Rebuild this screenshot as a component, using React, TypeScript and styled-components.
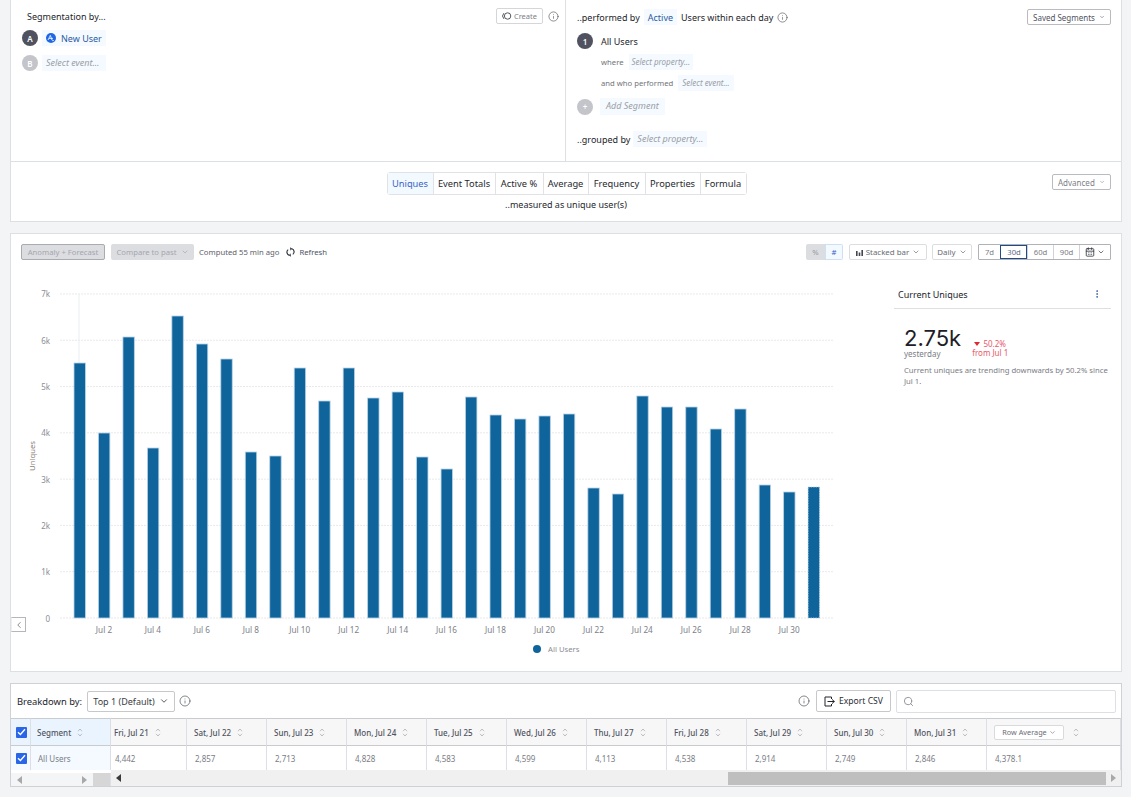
import React from "react";
import styled, { createGlobalStyle } from "styled-components";
import { ChevronDown, ChevronLeft, Info, Search, MoreVertical, CalendarDays } from "lucide-react";

const Global = createGlobalStyle`
  html, body { margin: 0; padding: 0; background: #f3f4f6; }
  body { font-family: "Noto Sans", "Open Sans", Arial, sans-serif; color: #21242b; overflow: hidden; }
  * { box-sizing: border-box; }
`;

const Page = styled.div`
  width: 1131px; height: 797px; padding: 0 9px 0 10px; display: flex; flex-direction: column;
`;
const Panel = styled.section`
  background: #fff; border: 1px solid #dcdfe3; border-top-width: ${p => (p.$flush ? 0 : 1)}px;
`;
const QueryPanel = styled(Panel)`
  height: 162px; display: grid; grid-template-columns: 555px 1fr;
`;
const QueryLeft = styled.div`
  border-right: 1px solid #dcdfe3; padding: 8px 6px 0 11px;
`;
const QueryRight = styled.div`
  padding: 9px 10px 0 11px; display: flex; flex-direction: column;
`;
const TitleRow = styled.div`
  display: flex; align-items: center; justify-content: space-between; height: 16px; padding-left: 5px;
`;
const Title = styled.span`
  font-size: 9px; color: #22252b; white-space: nowrap;
`;
const Row = styled.div`
  display: flex; align-items: center; gap: ${p => p.$gap ?? 4}px; margin-top: ${p => p.$mt ?? 0}px; padding-left: ${p => p.$pl ?? 0}px;
`;
const Spread = styled(Row)`
  justify-content: space-between;
`;
const Badge = styled.span`
  width: 16px; height: 16px; border-radius: 50%; background: ${p => (p.$off ? "#c3c5ca" : "#50535f")}; color: #fff;
  font-size: 8px; font-weight: 600; display: flex; align-items: center; justify-content: center; flex: none;
`;
const Chip = styled.span`
  background: #f4faff; height: ${p => p.$h ?? 16}px; width: ${p => (p.$w ? p.$w + "px" : "auto")}; padding: 0 ${p => p.$px ?? 4}px ${p => (p.$blue ? 0 : 2)}px; display: inline-flex; align-items: center; gap: 5px;
  font-size: ${p => p.$fs ?? 9}px; color: ${p => (p.$blue ? "#2c5aa0" : "#9b9ea6")}; font-style: ${p => (p.$blue ? "normal" : "italic")};
  white-space: nowrap;
`;
const TinyBtn = styled.span`
  border: 1px solid #d4d6da; border-radius: 2px; height: 16px; padding: 0 5px; background: #fff; display: inline-flex; align-items: center; gap: 2px;
  font-size: 7.5px; color: #7c7f87; white-space: nowrap;
`;
const CreateGroup = styled.div`
  display: flex; align-items: center; gap: 5px;
`;
const SavedBtn = styled(TinyBtn)`
  height: 16px; width: ${p => p.$w}px; justify-content: center; color: ${p => p.$c ?? "#50535f"}; border-color: #b9bbc0; gap: 4px; font-size: 8px;
`;
const Muted = styled.span`
  font-size: 7.7px; color: #70737b; white-space: nowrap;
`;
const MetricPanel = styled(Panel)`
  height: 60px; padding-top: 10px; position: relative; display: flex; flex-direction: column; align-items: center; border-top: 0;
`;
const Tabs = styled.div`
  display: flex; height: 23px; border: 1px solid #e0e2e6; border-radius: 3px; margin-left: 1px; flex: none;
`;
const Tab = styled.span`
  font-size: 9.3px; display: flex; align-items: center; white-space: nowrap;
  color: ${p => (p.$on ? "#3b63c9" : "#25282e")}; background: ${p => (p.$on ? "#f2f9ff" : "#fff")};
  width: ${p => p.$w}px; justify-content: center;
  & + & { border-left: 1px solid #e0e2e6; }
`;
const Measured = styled.div`
  font-size: 9px; color: #25282e; margin-top: 3px;
`;
const AdvancedSlot = styled.div`
  position: absolute; right: 10px; top: 12px; display: flex;
`;
const ChartPanel = styled(Panel)`
  height: 439px; margin-top: 11px; padding: 10px 10px 0 10px; position: relative;
`;
const Toolbar = styled.div`
  display: flex; align-items: center; justify-content: space-between; height: 16px;
`;
const ToolGroup = styled.div`
  display: flex; align-items: center;
`;
const GhostBtn = styled.span`
  height: 16px; width: ${p => p.$w}px; border-radius: 2px; background: #dcdde1; color: #a4a6ad; font-size: 7.7px; display: inline-flex; align-items: center; justify-content: center; gap: 4px;
  white-space: nowrap; border: ${p => (p.$outline ? "1px solid #a9abb1" : "0")}; margin-right: ${p => p.$mr ?? 6}px;
`;
const Computed = styled.span`
  font-size: 7.7px; color: #5d606a; white-space: nowrap;
`;
const Refresh = styled.span`
  display: inline-flex; align-items: center; gap: 4px; font-size: 7.7px; color: #4a5568; margin-left: 7px; white-space: nowrap;
`;
const Toggle = styled.div`
  display: flex; height: 16px; border-radius: 2px; overflow: hidden; margin-right: 6px;
`;
const ToggleCell = styled.span`
  width: ${p => (p.$on ? 18 : 19)}px; height: 16px; font-size: 7.7px; display: flex; align-items: center; justify-content: center;
  background: ${p => (p.$on ? "#f2f9ff" : "#dcdde1")}; color: ${p => (p.$on ? "#3b63c9" : "#9a9ca3")};
  border: ${p => (p.$on ? "1px solid #cfe0f5" : "0")};
`;
const SelectBtn = styled.span`
  height: 16px; width: ${p => p.$w}px; border: 1px solid #dcdde1; border-radius: 2px; display: inline-flex; align-items: center; justify-content: center; gap: 3px;
  font-size: 7.9px; color: #6a6d75; margin-right: ${p => p.$mr ?? 5}px; white-space: nowrap;
`;
const RangeGroup = styled.div`
  display: flex; height: 16px; border: 1px solid #b0b2b7; border-radius: 1px;
`;
const RangeCell = styled.span`
  width: ${p => p.$w ?? 26}px; font-size: 7.7px; color: #7a7d85; display: flex; align-items: center; justify-content: center; gap: 2px;
  border-left: 1px solid #d0d2d6;
  &:first-child { border-left: 0; }
  ${p => p.$on && "outline: 1px solid #1f4a8c; outline-offset: -1px; color: #5a6a85;"}
`;
const ChartBody = styled.div`
  display: flex; margin: 20px 0 0 -10px;
`;
const Side = styled.aside`
  width: 217px; margin-left: 25px; flex: none;
`;
const SideHead = styled.div`
  height: 29px; display: flex; align-items: center; justify-content: space-between; border-bottom: 1px solid #dcdfe3; padding: 0 9px 0 4px;
  font-size: 9px; color: #22252b;
`;
const KpiRow = styled.div`
  display: flex; margin: 18px 0 0 10px; gap: 11px;
`;
const KpiNum = styled.div`
  font-family: "Inter", "Noto Sans", sans-serif; font-size: 22px; line-height: 23px; color: #1d2026;
`;
const KpiSub = styled.div`
  font-size: 8px; line-height: 8px; color: #7a7d85;
`;
const Delta = styled.div`
  font-size: 8px; line-height: 9px; color: #e8596a; margin-top: 12px; text-align: center;
`;
const Caret = styled.span`
  display: inline-block; width: 0; height: 0; border: 3.5px solid transparent; border-top: 4px solid #e5252f; border-bottom: 0; margin-right: 3px; vertical-align: 1px;
`;
const KpiText = styled.p`
  margin: 7px 0 0 10px; font-size: 7.7px; line-height: 10.5px; color: #7a7d85; width: 207px;
`;
const Collapse = styled.span`
  position: absolute; left: 0; top: 383px; width: 15px; height: 15px; background: #fff; border: 1px solid #b4b6bb; border-left-color: #eee;
  display: flex; align-items: center; justify-content: center; color: #777;
`;
const Legend = styled.div`
  position: absolute; left: 522px; top: 410px; display: flex; align-items: center; gap: 7px; font-size: 7.7px; color: #8a8d95;
`;
const Dot = styled.span`
  width: 8px; height: 8px; border-radius: 50%; background: #0f659b;
`;
const BreakPanel = styled(Panel)`
  height: 104px; margin-top: 11px; display: flex; flex-direction: column; border-color: #cfd1d5;
`;
const BreakBar = styled.div`
  height: 34px; display: flex; align-items: center; justify-content: space-between; padding: 0 5px 0 6px; flex: none;
`;
const BreakLabel = styled.span`
  font-size: 9.4px; color: #22252b; margin-right: 5px;
`;
const BreakSelect = styled.span`
  height: 21px; width: 88px; border: 1px solid #c6c8cc; border-radius: 2px; display: inline-flex; align-items: center; justify-content: center; gap: 4px; font-size: 9px; color: #3a3d45; white-space: nowrap;
`;
const Export = styled.span`
  height: 22px; width: 75px; border: 1px solid #c6c8cc; border-radius: 2px; display: inline-flex; align-items: center; justify-content: center; gap: 4px; font-size: 8.6px; color: #2b2e36; margin: 0 5px 0 6px; white-space: nowrap;
`;
const SearchBox = styled.span`
  width: 220px; height: 23px; border: 1px solid #dcdfe3; border-radius: 2px; display: inline-flex; align-items: center; padding-left: 6px; color: #8c8f96;
`;
const Table = styled.div`
  display: grid; grid-template-columns: 20px 80px 76px repeat(10, 80px) 1fr; grid-template-rows: 28px 24px; flex: none;
`;
const HeadCell = styled.div`
  background: ${p => (p.$seg ? "#e9f4fe" : "#f7f7f7")}; border-top: 1px solid #c9cbcf; border-bottom: 1px solid #c9cbcf; border-right: 1px solid #dcdfe3;
  font-size: 8px; font-weight: 500; color: #50535f; display: flex; align-items: center; gap: 6px; padding-left: ${p => p.$pl ?? 7}px; white-space: nowrap;
`;
const BodyCell = styled.div`
  background: ${p => (p.$seg ? "#f4faff" : "#fff")}; border-right: 1px solid #dcdfe3; font-size: 8px; color: #7a7d85; display: flex; align-items: center;
  padding-left: ${p => p.$pl ?? 8}px; white-space: nowrap;
`;
const Check = styled.span`
  width: 11px; height: 11px; background: #2a66e8; border-radius: 1px; display: flex; align-items: center; justify-content: center;
`;
const CheckHead = styled(HeadCell)`
  background: #e9f4fe; padding-left: 5px;
`;
const CheckBody = styled(BodyCell)`
  background: #f4faff; padding-left: 5px;
`;
const RowAvg = styled.span`
  height: 15px; width: 70px; border: 1px solid #d8dade; border-radius: 2px; background: #fff; font-size: 7.3px; font-weight: 400; color: #6a6d75; display: inline-flex; align-items: center; justify-content: center; gap: 2px;
`;
const AvgHead = styled(HeadCell)`
  gap: 9px;
`;
const Scrolls = styled.div`
  display: grid; grid-template-columns: 100px 1fr; height: 16px; flex: none;
`;
const LeftScroll = styled.div`
  background: #f4f5f6; display: flex; align-items: center; justify-content: space-between; padding-left: 6px; margin-top: 3px; height: 13px; border-right: 1px solid #dcdfe3;
`;
const LeftThumb = styled.span`
  width: 17px; height: 13px; background: #d6d6d6;
`;
const Arrow = styled.span`
  width: 0; height: 0; border: 4px solid transparent; ${p => (p.$dir === "left" ? "border-right: 5px solid " + p.$c + "; border-left: 0;" : "border-left: 5px solid " + p.$c + "; border-right: 0;")}
`;
const LeftArrows = styled.div`
  flex: 1; display: flex; justify-content: space-between; padding-right: 6px;
`;
const RightScroll = styled.div`
  background: #f0f0f0; display: flex; align-items: center; padding: 0 5px 0 5px;
`;
const Thumb = styled.span`
  height: 13px; width: 378px; background: #bfbfbf; margin-left: auto; margin-right: 5px;
`;
const InfoGap = styled.span`
  display: inline-flex; margin-left: ${p => p.$ml ?? 0}px;
`;

const Sort = () => (
  <svg width="6" height="9" viewBox="0 0 6 9" fill="none" stroke="#b5b7bc" strokeWidth="0.9">
    <path d="M1 3.2 3 1l2 2.2M1 5.8 3 8l2-2.2" />
  </svg>
);
const Tick = () => (
  <svg width="9" height="8" viewBox="0 0 9 8" fill="none" stroke="#fff" strokeWidth="1.4">
    <path d="M1 4.2 3.4 6.5 8 1.2" />
  </svg>
);
const Logo = () => (
  <svg width="10" height="10" viewBox="0 0 10 10">
    <circle cx="5" cy="5" r="5" fill="#1f66e5" />
    <path d="M2 7 4.3 2.4 6 7c.4.8 1 .9 2 .3M3 5.4h4" fill="none" stroke="#fff" strokeWidth=".8" />
  </svg>
);
const CreateIcon = () => (
  <svg width="10" height="10" viewBox="0 0 10 10" fill="none" stroke="#55585f" strokeWidth="1">
    <circle cx="5.6" cy="5" r="3.2" />
    <path d="M1.8 2.2A4.2 4.2 0 0 0 1.8 7.8" />
  </svg>
);
const RefreshIcon = () => (
  <svg width="9" height="10" viewBox="0 0 9 10" fill="none" stroke="#22252b" strokeWidth="1.1">
    <path d="M2.2 2.6A3.2 3.2 0 0 0 3 8.2M6.8 7.4A3.2 3.2 0 0 0 6 1.8" />
    <path d="M4.2.6 6 1.8 4.4 3.2M4.8 9.4 3 8.2 4.6 6.8" fill="#22252b" strokeWidth=".4" />
  </svg>
);
const BarsIcon = () => (
  <svg width="7" height="7" viewBox="0 0 7 7" fill="#44474f">
    <rect x="0" y="2" width="1.6" height="5" /><rect x="2.7" y="3.5" width="1.6" height="3.5" /><rect x="5.4" y="1" width="1.6" height="6" />
  </svg>
);
const ExportIcon = () => (
  <svg width="11" height="11" viewBox="0 0 11 11" fill="none" stroke="#22252b" strokeWidth="1">
    <path d="M7.5 3V1H1v9h6.5V8" />
    <path d="M3.5 5.5h7M8 3.4l2.3 2.1L8 7.6" />
  </svg>
);

const values = [363, 433, 337, 448, 316, 344, 359, 452, 456, 368, 401, 368, 398, 392, 457, 469, 397, 415, 419, 416, 414, 488, 494, 396, 407, 407, 429, 409, 485, 492, 487];
const CHART_TOP = 280;
const BaseY = 618 - CHART_TOP;
const barX = (i: number) => 79.5 - 11 + i * 24.47;

const Chart = () => (
  <svg width="858" height="360" viewBox="0 0 858 360" style={{ display: "block", flex: "none" }}>
    {[0, 1, 2, 3, 4, 5, 6, 7].map(k => {
      const y = BaseY - k * 46.29;
      return (
        <g key={k}>
          <line x1={49} x2={822} y1={y} y2={y} stroke="#e8e9eb" strokeWidth="1" strokeDasharray="2 1" />
          <text x={39} y={y + 3.5} textAnchor="end" fontSize="8" fill="#8a8d95" fontFamily="Noto Sans">{k === 0 ? "0" : `${k}k`}</text>
        </g>
      );
    })}
    <line x1={68} x2={68} y1={14} y2={BaseY} stroke="#e6efef" />
    {values.map((v, i) => (
      <rect key={i} x={barX(i) - 5.5} y={v - CHART_TOP} width={11.4} height={618 - v} fill="#0f659b" stroke="#b8d2e6" strokeWidth="0.8"
        strokeDasharray={i === 30 ? "1.5 1" : undefined} />
    ))}
    {Array.from({ length: 15 }, (_, n) => (
      <text key={n} x={barX(1 + n * 2)} y={BaseY + 14.5} textAnchor="middle" fontSize="8.2" fill="#7d8088" fontFamily="Noto Sans">{`Jul ${2 + n * 2}`}</text>
    ))}
    <text transform={`translate(24 ${BaseY - 162}) rotate(-90)`} textAnchor="middle" fontSize="7.7" fill="#8a7d75" fontFamily="Noto Sans">Uniques</text>
  </svg>
);

const dates = [
  ["Fri, Jul 21", "4,442"], ["Sat, Jul 22", "2,857"], ["Sun, Jul 23", "2,713"], ["Mon, Jul 24", "4,828"], ["Tue, Jul 25", "4,583"], ["Wed, Jul 26", "4,599"],
  ["Thu, Jul 27", "4,113"], ["Fri, Jul 28", "4,538"], ["Sat, Jul 29", "2,914"], ["Sun, Jul 30", "2,749"], ["Mon, Jul 31", "2,846"],
];

export default function App() {
  return (
    <Page>
      <Global />
      <QueryPanel $flush>
        <QueryLeft>
          <TitleRow>
            <Title>Segmentation by...</Title>
            <CreateGroup>
              <TinyBtn><CreateIcon />Create</TinyBtn>
              <Info size={11} color="#44474f" strokeWidth={1.3} />
            </CreateGroup>
          </TitleRow>
          <Row $mt={6}>
            <Badge>A</Badge>
            <Chip $blue $w={64}><Logo />New User</Chip>
          </Row>
          <Row $mt={9}>
            <Badge $off>B</Badge>
            <Chip $w={64}>Select event...</Chip>
          </Row>
        </QueryLeft>
        <QueryRight>
          <Spread>
            <Row $gap={4}>
              <Title>..performed by</Title>
              <Chip $blue>Active</Chip>
              <Title>Users within each day</Title>
              <Info size={11} color="#44474f" strokeWidth={1.3} />
            </Row>
            <SavedBtn $w={84}>Saved Segments <ChevronDown size={8} /></SavedBtn>
          </Spread>
          <Row $mt={8} $gap={8}>
            <Badge>1</Badge>
            <Title>All Users</Title>
          </Row>
          <Row $mt={5} $pl={24} $gap={5}>
            <Muted>where</Muted>
            <Chip $fs={8} $px={3}>Select property...</Chip>
          </Row>
          <Row $mt={5} $pl={24} $gap={5}>
            <Muted>and who performed</Muted>
            <Chip $fs={8}>Select event...</Chip>
          </Row>
          <Row $mt={7} $gap={7}>
            <Badge $off>+</Badge>
            <Chip $h={17} $px={6}>Add Segment</Chip>
          </Row>
          <Row $mt={16} $gap={3}>
            <Title>..grouped by</Title>
            <Chip>Select property...</Chip>
          </Row>
        </QueryRight>
      </QueryPanel>
      <MetricPanel>
        <Tabs>
          <Tab $on $w={45}>Uniques</Tab>
          <Tab $w={62}>Event Totals</Tab>
          <Tab $w={48}>Active %</Tab>
          <Tab $w={45}>Average</Tab>
          <Tab $w={57}>Frequency</Tab>
          <Tab $w={55}>Properties</Tab>
          <Tab $w={46}>Formula</Tab>
        </Tabs>
        <Measured>..measured as unique user(s)</Measured>
        <AdvancedSlot><SavedBtn $w={59} $c="#7c7f87">Advanced <ChevronDown size={8} /></SavedBtn></AdvancedSlot>
      </MetricPanel>
      <ChartPanel>
        <Toolbar>
          <ToolGroup>
            <GhostBtn $outline $w={84}>Anomaly + Forecast</GhostBtn>
            <GhostBtn $w={83} $mr={5}>Compare to past <ChevronDown size={8} /></GhostBtn>
            <Computed>Computed 55 min ago</Computed>
            <Refresh><RefreshIcon />Refresh</Refresh>
          </ToolGroup>
          <ToolGroup>
            <Toggle><ToggleCell>%</ToggleCell><ToggleCell $on>#</ToggleCell></Toggle>
            <SelectBtn $w={78}><BarsIcon />Stacked bar <ChevronDown size={8} /></SelectBtn>
            <SelectBtn $w={40} $mr={6}>Daily <ChevronDown size={8} /></SelectBtn>
            <RangeGroup>
              <RangeCell $w={21}>7d</RangeCell>
              <RangeCell $on $w={27}>30d</RangeCell>
              <RangeCell>60d</RangeCell>
              <RangeCell>90d</RangeCell>
              <RangeCell $w={31}><CalendarDays size={10} color="#33363d" /><ChevronDown size={8} color="#33363d" /></RangeCell>
            </RangeGroup>
          </ToolGroup>
        </Toolbar>
        <ChartBody>
          <Chart />
          <Side>
            <SideHead>Current Uniques<MoreVertical size={10} color="#2c5aa0" /></SideHead>
            <KpiRow>
              <div>
                <KpiNum>2.75k</KpiNum>
                <KpiSub>yesterday</KpiSub>
              </div>
              <Delta><Caret />50.2%<br />from Jul 1</Delta>
            </KpiRow>
            <KpiText>Current uniques are trending downwards by 50.2% since Jul 1.</KpiText>
          </Side>
        </ChartBody>
        <Collapse><ChevronLeft size={10} /></Collapse>
        <Legend><Dot />All Users</Legend>
      </ChartPanel>
      <BreakPanel>
        <BreakBar>
          <ToolGroup>
            <BreakLabel>Breakdown by:</BreakLabel>
            <BreakSelect>Top 1 (Default) <ChevronDown size={10} /></BreakSelect>
            <InfoGap $ml={4}><Info size={12} color="#44474f" strokeWidth={1.3} /></InfoGap>
          </ToolGroup>
          <ToolGroup>
            <Info size={12} color="#44474f" strokeWidth={1.3} />
            <Export><ExportIcon />Export CSV</Export>
            <SearchBox><Search size={11} /></SearchBox>
          </ToolGroup>
        </BreakBar>
        <Table>
          <CheckHead><Check><Tick /></Check></CheckHead>
          <HeadCell $seg $pl={6}>Segment <Sort /></HeadCell>
          {dates.map(([d], i) => <HeadCell key={d} $pl={i === 0 ? 3 : 7}>{d} <Sort /></HeadCell>)}
          <AvgHead><RowAvg>Row Average <ChevronDown size={7} /></RowAvg><Sort /></AvgHead>
          <CheckBody><Check><Tick /></Check></CheckBody>
          <BodyCell $seg $pl={7}>All Users</BodyCell>
          {dates.map(([d, v], i) => <BodyCell key={d} $pl={i === 0 ? 4 : 8}>{v}</BodyCell>)}
          <BodyCell>4,378.1</BodyCell>
        </Table>
        <Scrolls>
          <LeftScroll>
            <LeftArrows><Arrow $dir="left" $c="#a8a8a8" /><Arrow $dir="right" $c="#a8a8a8" /></LeftArrows>
            <LeftThumb />
          </LeftScroll>
          <RightScroll>
            <Arrow $dir="left" $c="#3a3a3a" />
            <Thumb />
            <Arrow $dir="right" $c="#a8a8a8" />
          </RightScroll>
        </Scrolls>
      </BreakPanel>
    </Page>
  );
}
